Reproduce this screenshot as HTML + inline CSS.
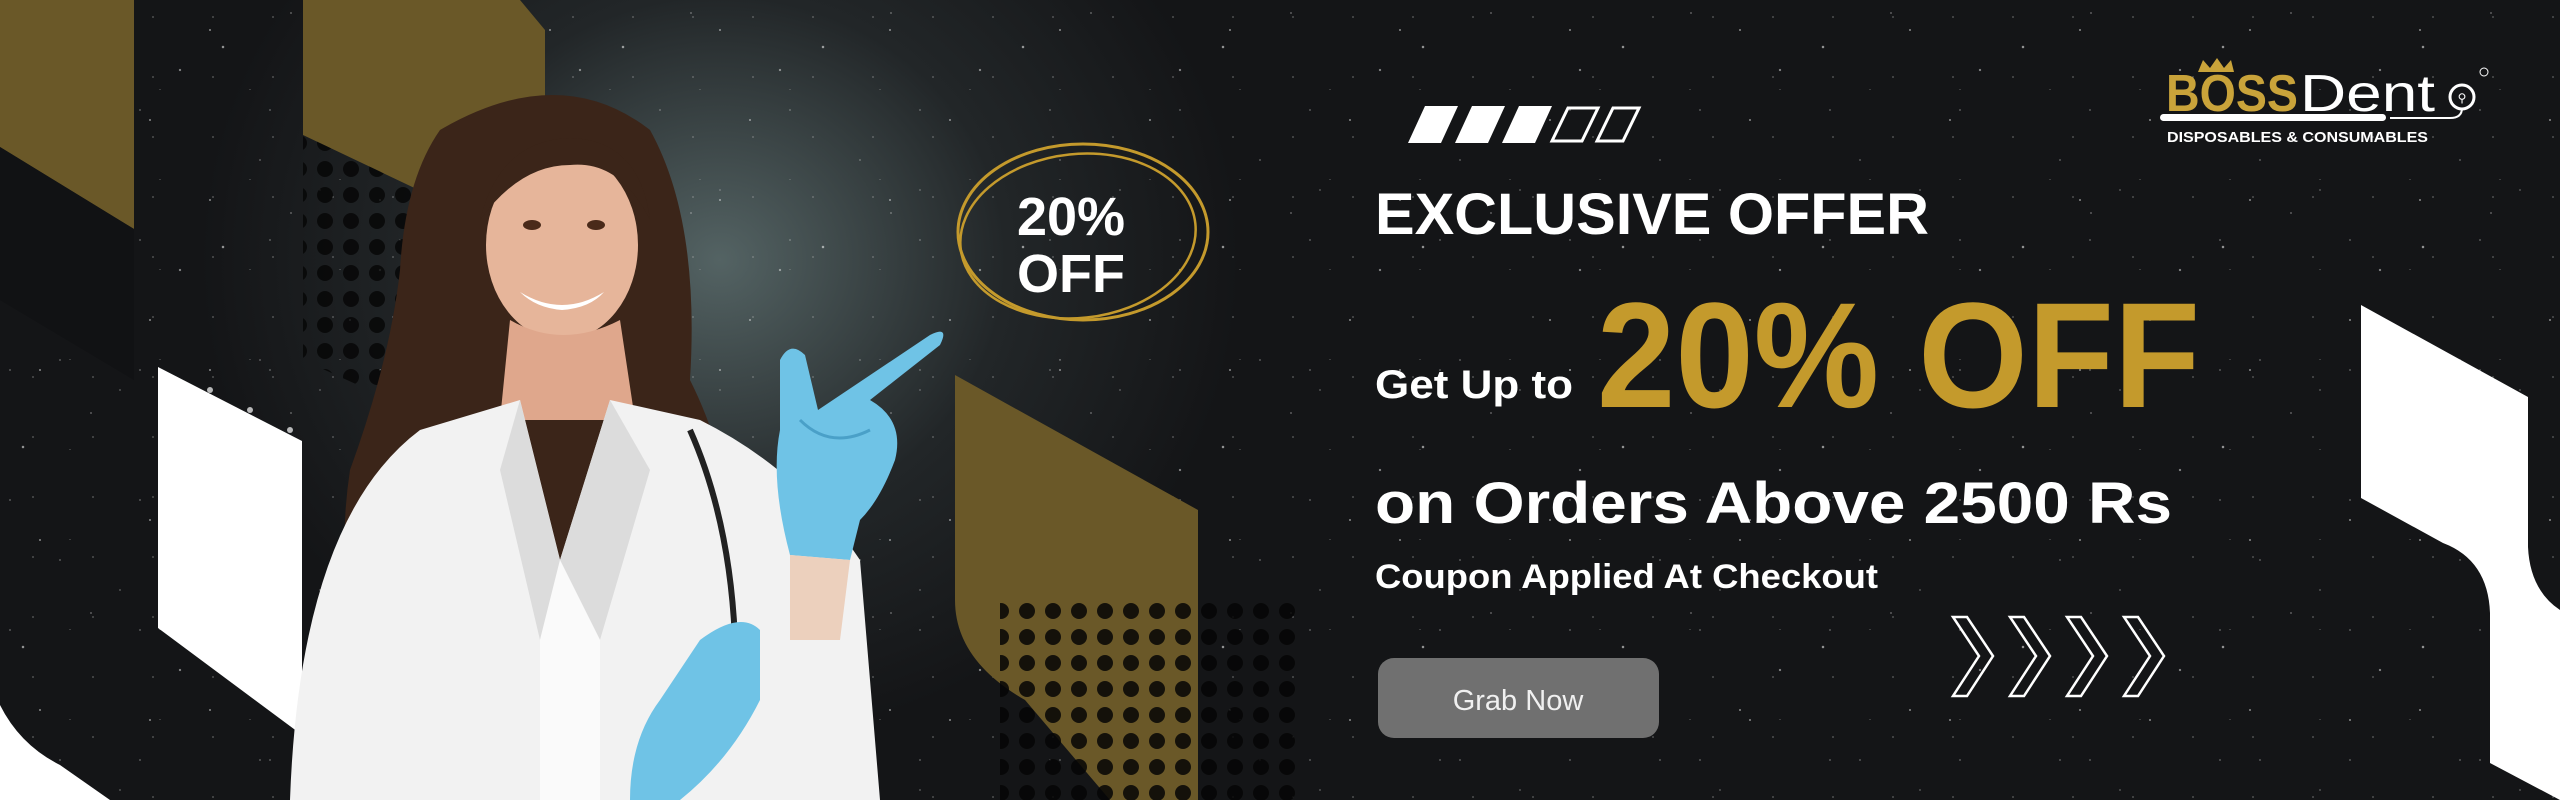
<!DOCTYPE html>
<html><head><meta charset="utf-8"><style>
html,body{margin:0;padding:0;background:#131416}
#b{position:relative;width:2560px;height:800px;overflow:hidden;background:#141517;
background-image:radial-gradient(ellipse 520px 480px at 720px 260px,rgba(105,125,125,.75),rgba(60,70,72,.35) 55%,rgba(20,21,23,0) 100%);}
#stars{position:absolute;inset:0;
background-image:
radial-gradient(1.6px 1.6px at 23px 47px,#fff,transparent),
radial-gradient(1px 1px at 91px 13px,#ddd,transparent),
radial-gradient(1.2px 1.2px at 150px 120px,#fff,transparent),
radial-gradient(1px 1px at 60px 160px,#ccc,transparent),
radial-gradient(1.4px 1.4px at 180px 70px,#eee,transparent),
radial-gradient(1px 1px at 120px 190px,#bbb,transparent),
radial-gradient(1px 1px at 10px 110px,#ccc,transparent),
radial-gradient(1.2px 1.2px at 40px 30px,#fff,transparent),
radial-gradient(1px 1px at 70px 90px,#aaa,transparent),
radial-gradient(1px 1px at 33px 17px,#bbb,transparent);
background-size:200px 200px,200px 200px,200px 200px,200px 200px,200px 200px,200px 200px,130px 130px,170px 170px,90px 90px,60px 60px;}
svg{position:absolute;left:0;top:0}
</style></head><body><div id="b"><div id="stars"></div>
<svg width="2560" height="800" viewBox="0 0 2560 800" font-family="Liberation Sans, sans-serif">
<defs>
<pattern id="dots" width="26" height="26" patternUnits="userSpaceOnUse"><circle cx="13" cy="13" r="8" fill="#050505"/></pattern>
<pattern id="wdots" width="20" height="20" patternUnits="userSpaceOnUse"><circle cx="10" cy="10" r="3" fill="#fff"/></pattern>
</defs>
<polygon points="0,0 134,0 134,229 0,147" fill="#6a5828"/>
<polygon points="0,147 134,229 134,380 0,300" fill="#111214"/>
<polygon points="303,0 520,0 545,30 545,250 303,135" fill="#6a5828"/>
<polygon points="303,135 545,250 545,470 303,360" fill="url(#dots)" opacity=".8"/>
<polygon points="200,380 303,430 303,500 200,450" fill="url(#wdots)" opacity=".7"/>
<path d="M955,375 L1198,510 L1198,800 L1110,800 L1025,700 Q955,660 955,600 Z" fill="#6a5828"/>
<polygon points="1000,600 1300,600 1300,800 1000,800" fill="url(#dots)" opacity=".85"/>
<polygon points="158,367 302,441 302,735 158,628" fill="#fff"/>
<path d="M0,705 Q20,745 60,765 L110,800 L0,800 Z" fill="#fff"/>
<path d="M2361,305 L2528,397 L2528,547 Q2530,590 2560,610 L2560,800 L2490,763 L2490,613 Q2488,560 2443,543 L2361,498 Z" fill="#fff"/>
<!-- woman -->
<path d="M440,130 Q560,60 650,130 Q700,220 690,380 Q740,480 720,560 L720,760 L380,760 Q330,600 350,470 Q390,360 400,270 Q405,180 440,130Z" fill="#3b2519"/>
<path d="M420,430 Q370,560 420,720 L470,740 Q460,600 490,440Z" fill="#7a4a2a" opacity=".85"/>
<ellipse cx="562" cy="245" rx="76" ry="95" fill="#e6b59a"/>
<path d="M480,220 Q500,140 570,138 Q640,140 650,220 Q620,160 570,165 Q520,165 480,220Z" fill="#3b2519"/>
<ellipse cx="532" cy="225" rx="9" ry="5" fill="#4a2a1a"/><ellipse cx="596" cy="225" rx="9" ry="5" fill="#4a2a1a"/>
<path d="M520,292 Q562,318 604,292 Q590,308 562,310 Q536,308 520,292Z" fill="#fff"/>
<path d="M510,320 Q562,350 620,320 L635,420 L500,420Z" fill="#dfa78c"/>
<path d="M290,800 Q300,520 420,430 L520,400 L560,560 L610,400 L700,420 Q800,470 860,560 L880,800Z" fill="#f2f2f2"/>
<path d="M520,400 L560,560 L540,640 L500,470Z M610,400 L560,560 L600,640 L650,470Z" fill="#dcdcdc"/>
<path d="M560,560 L600,640 L600,800 L540,800 L540,640Z" fill="#fafafa"/>
<path d="M690,430 Q730,520 735,640" stroke="#222" stroke-width="6" fill="none"/>
<path d="M780,360 Q790,340 805,355 L818,410 L930,335 Q950,325 940,345 L870,400 Q905,420 895,460 Q880,500 860,520 L850,560 L790,555 Q770,480 780,430Z" fill="#6fc3e6"/>
<path d="M800,420 Q830,450 870,430" stroke="#4aa0c8" stroke-width="3" fill="none"/>
<path d="M790,555 L850,560 L840,640 L790,640Z" fill="#ecd0bd"/>
<path d="M700,640 Q740,610 760,630 L760,700 Q730,760 680,800 L630,800 Q630,740 660,700Z" fill="#6fc3e6"/>
<!-- circle badge -->
<ellipse cx="1083" cy="232" rx="125" ry="88" fill="none" stroke="#c49a2c" stroke-width="3"/>
<ellipse cx="1078" cy="236" rx="118" ry="82" fill="none" stroke="#c49a2c" stroke-width="2.5" transform="rotate(-6 1078 236)"/>
<text x="1071" y="235" text-anchor="middle" font-size="54" font-weight="bold" fill="#fff">20%</text>
<text x="1071" y="292" text-anchor="middle" font-size="54" font-weight="bold" fill="#fff">OFF</text>
<g fill="#fff"><polygon points="1425,106 1458,106 1441,143 1408,143"/><polygon points="1472,106 1505,106 1488,143 1455,143"/><polygon points="1519,106 1552,106 1535,143 1502,143"/></g>
<g fill="none" stroke="#fff" stroke-width="3"><polygon points="1568,108 1598,108 1582,141 1552,141"/><polygon points="1613,108 1639,108 1623,141 1597,141"/></g>
<text x="1375" y="234" font-size="58" font-weight="bold" fill="#fff" textLength="554" lengthAdjust="spacingAndGlyphs">EXCLUSIVE OFFER</text>
<text x="1375" y="398" font-size="40" font-weight="bold" fill="#fff" textLength="198" lengthAdjust="spacingAndGlyphs">Get Up to</text>
<text x="1597" y="407" font-size="150" font-weight="bold" fill="#c49a2c" textLength="603" lengthAdjust="spacingAndGlyphs">20% OFF</text>
<text x="1375" y="523" font-size="58" font-weight="bold" fill="#fff" textLength="797" lengthAdjust="spacingAndGlyphs">on Orders Above 2500 Rs</text>
<text x="1375" y="588" font-size="34" font-weight="bold" fill="#fff" textLength="503" lengthAdjust="spacingAndGlyphs">Coupon Applied At Checkout</text>
<rect x="1378" y="658" width="281" height="80" rx="16" fill="#707070"/>
<text x="1518" y="710" text-anchor="middle" font-size="29" fill="#f0f0f0">Grab Now</text>
<g fill="none" stroke="#fff" stroke-width="2.5">
<path d="M1953,617 L1967,617 L1993,656 L1967,696 L1953,696 L1979,656Z"/>
<path d="M2010,617 L2024,617 L2050,656 L2024,696 L2010,696 L2036,656Z"/>
<path d="M2067,617 L2081,617 L2107,656 L2081,696 L2067,696 L2093,656Z"/>
<path d="M2124,617 L2138,617 L2164,656 L2138,696 L2124,696 L2150,656Z"/>
</g>
<path d="M2198,72 L2203,60 L2210,68 L2217,58 L2224,68 L2231,60 L2234,72Z" fill="#c9a33a"/>
<text x="2166" y="111" font-size="52" font-weight="bold" fill="#c9a33a" textLength="132" lengthAdjust="spacingAndGlyphs">BOSS</text>
<text x="2300" y="111" font-size="52" fill="#fff" textLength="135" lengthAdjust="spacingAndGlyphs">Dent</text>
<rect x="2160" y="114" width="226" height="7" rx="3.5" fill="#fff"/>
<path d="M2390,118 L2450,118 Q2462,118 2462,108" stroke="#fff" stroke-width="2" fill="none"/>
<circle cx="2462" cy="97" r="12" fill="none" stroke="#fff" stroke-width="3"/>
<text x="2462" y="102" text-anchor="middle" font-size="12" fill="#fff">⚲</text>
<circle cx="2484" cy="72" r="4" fill="none" stroke="#fff" stroke-width="1"/>
<text x="2167" y="142" font-size="15" font-weight="bold" fill="#fff" textLength="261" lengthAdjust="spacingAndGlyphs">DISPOSABLES &amp; CONSUMABLES</text>
</svg></div></body></html>
